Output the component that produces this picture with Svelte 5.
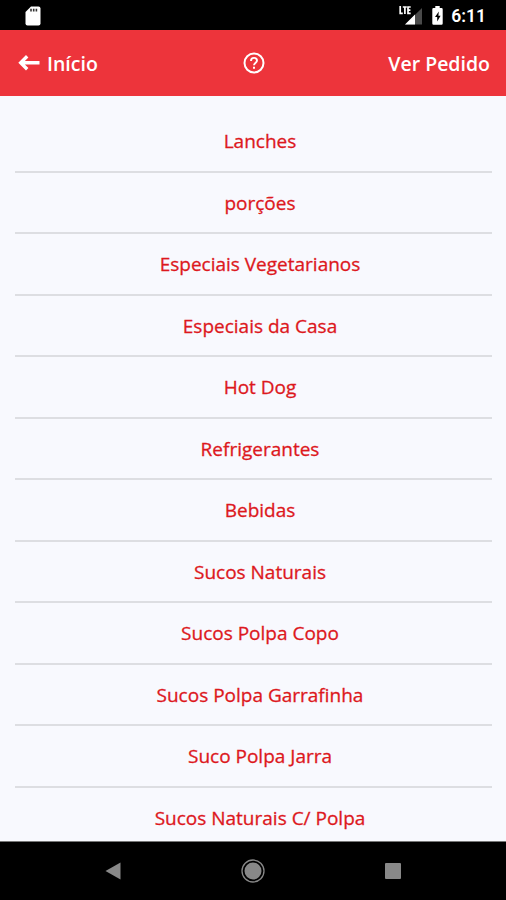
<script lang="ts">
  const categories: string[] = [
    'Lanches',
    'porções',
    'Especiais Vegetarianos',
    'Especiais da Casa',
    'Hot Dog',
    'Refrigerantes',
    'Bebidas',
    'Sucos Naturais',
    'Sucos Polpa Copo',
    'Sucos Polpa Garrafinha',
    'Suco Polpa Jarra',
    'Sucos Naturais C/ Polpa',
  ]
</script>

<div class="screen">
  <div class="status-bar">
    <svg class="sd-card" width="16" height="20" viewBox="0 0 16 20">
      <path d="M6 .5h7.500A2 2 0 0 1 15.500 2.500v15a2 2 0 0 1-2 2h-11a2 2 0 0 1-2-2V6z" fill="#fff" />
      <path d="M6 2.800v2.700M8.700 2.800v2.700M11.400 2.800v2.700" stroke="#333" stroke-width="1.600" />
    </svg>
    <div class="status-right">
      <svg width="24" height="19" viewBox="0 0 24 19">
        <path d="M23 2v16.500H6z" fill="#4a4a4a" />
        <path d="M16 8.500v10H6z" fill="#fff" />
        <path d="M1.200 0v7.300h2.600M3.800 1h4M5.900 1v7M11.700 1H9v6.300h2.700M9 4.100h2.400" fill="none" stroke="#fff" stroke-width="1.700" />
      </svg>
      <svg class="battery" width="11" height="19" viewBox="0 0 11 19">
        <path d="M3.300 0h4.400v2H9.500Q10.700 2 10.700 3.200v14.300q0 1.200-1.200 1.200h-8Q.3 18.700.3 17.500V3.200Q.3 2 1.500 2h1.800z" fill="#fff" />
        <path d="M6.800 5.500 3 11h2.200v4.500L8.600 9.800H6.400z" fill="#000" />
      </svg>
      <span class="clock">6:11</span>
    </div>
  </div>

  <header class="toolbar">
    <button class="back">
      <svg width="22" height="18" viewBox="0 0 22 18">
        <path d="M21.500 8.800H2.500M9.200 2.300 2.700 8.800l6.500 6.500" fill="none" stroke="#fff" stroke-width="3.400" />
      </svg>
      <span>Início</span>
    </button>
    <button class="help" aria-label="Ajuda">
      <svg width="22" height="22" viewBox="0 0 22 22" fill="none" stroke="#fff">
        <circle cx="11" cy="11" r="9.500" stroke-width="2" />
        <path d="M8 9Q8 5.900 11 5.900T14 8.700C14 10.500 11 10.900 11 13.200" stroke-width="1.900" />
        <path d="M11 14.700v2" stroke-width="2" />
      </svg>
    </button>
    <button class="order"><span>Ver Pedido</span></button>
  </header>

  <ul class="categories">
    {#each categories as category}
      <li>{category}</li>
    {/each}
  </ul>

  <nav class="nav-bar">
    <svg width="16" height="18" viewBox="0 0 16 18">
      <path d="M.5 9 15.500.5v17z" fill="#888" />
    </svg>
    <svg width="24" height="24" viewBox="0 0 24 24">
      <circle cx="12" cy="12" r="11" fill="none" stroke="#888" stroke-width="1.300" />
      <circle cx="12" cy="12" r="8.500" fill="#888" />
    </svg>
    <svg width="16" height="16" viewBox="0 0 16 16">
      <rect width="16" height="16" rx="1" fill="#888" />
    </svg>
  </nav>
</div>

<style>
  :global(body) {
    margin: 0;
    background: #000;
  }

  .screen {
    display: flex;
    flex-direction: column;
    width: 506px;
    height: 900px;
    overflow: hidden;
    background: #f8f9fe;
    font-family: 'Open Sans', 'Noto Sans', sans-serif;
  }

  .status-bar {
    display: flex;
    align-items: center;
    justify-content: space-between;
    flex: none;
    box-sizing: border-box;
    height: 30px;
    padding: 1px 20px 0 25px;
    background: #000;
  }

  .status-right {
    display: flex;
    align-items: center;
  }

  .battery {
    margin: 0 8px 0 9px;
  }

  .clock {
    color: #fff;
    font-family: Roboto, sans-serif;
    font-size: 17.5px;
    font-weight: 600;
    line-height: 20px;
  }

  .toolbar {
    display: grid;
    grid-template-columns: 1fr 22px 1fr;
    align-items: center;
    flex: none;
    box-sizing: border-box;
    height: 66px;
    padding: 0 16px 0 18px;
    background: #ed343b;
  }

  button {
    padding: 0;
    border: 0;
    background: none;
    color: #fff;
    font: 600 19.5px/26px 'Open Sans', 'Noto Sans', sans-serif;
  }

  button span {
    padding-top: 2px;
  }

  .back {
    display: flex;
    align-items: center;
    gap: 7px;
  }

  .help svg {
    display: block;
  }

  .order {
    display: flex;
    justify-self: end;
  }

  .categories {
    flex: 1;
    min-height: 0;
    margin: 0;
    padding: 15px 14px 0 15px;
    overflow: hidden;
    list-style: none;
  }

  .categories li {
    box-sizing: border-box;
    height: 61.55px;
    padding-left: 13px;
    border-bottom: 2px solid #dddee2;
    color: #dd181d;
    font-size: 19px;
    line-height: 61px;
    text-align: center;
    -webkit-text-stroke: 0.3px #dd181d;
  }

  .nav-bar {
    display: flex;
    align-items: center;
    justify-content: space-between;
    flex: none;
    box-sizing: border-box;
    height: 59px;
    padding: 0 105px;
    border-top: 1px solid #777;
    background: #000;
  }
</style>
